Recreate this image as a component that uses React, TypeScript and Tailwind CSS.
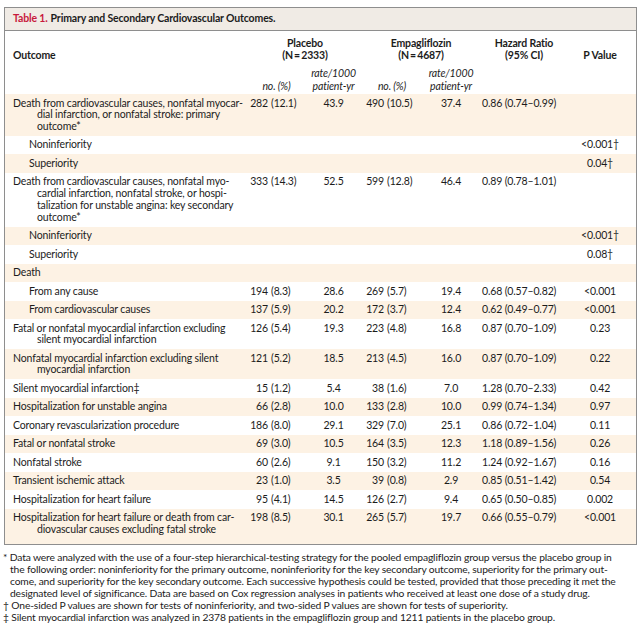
type Row = {
  label: string[];
  sub?: boolean;
  p?: [string, string];
  pr?: string;
  e?: [string, string];
  er?: string;
  hr?: string;
  pv?: string;
};

const rows: Row[] = [
  {
    label: [
      "Death from cardiovascular causes, nonfatal myocar-",
      "dial infarction, or nonfatal stroke: primary",
      "outcome*",
    ],
    p: ["282", "(12.1)"],
    pr: "43.9",
    e: ["490", "(10.5)"],
    er: "37.4",
    hr: "0.86 (0.74–0.99)",
  },
  { label: ["Noninferiority"], sub: true, pv: "<0.001†" },
  { label: ["Superiority"], sub: true, pv: "0.04†" },
  {
    label: [
      "Death from cardiovascular causes, nonfatal myo-",
      "cardial infarction, nonfatal stroke, or hospi-",
      "talization for unstable angina: key secondary",
      "outcome*",
    ],
    p: ["333", "(14.3)"],
    pr: "52.5",
    e: ["599", "(12.8)"],
    er: "46.4",
    hr: "0.89 (0.78–1.01)",
  },
  { label: ["Noninferiority"], sub: true, pv: "<0.001†" },
  { label: ["Superiority"], sub: true, pv: "0.08†" },
  { label: ["Death"] },
  {
    label: ["From any cause"],
    sub: true,
    p: ["194", "(8.3)"],
    pr: "28.6",
    e: ["269", "(5.7)"],
    er: "19.4",
    hr: "0.68 (0.57–0.82)",
    pv: "<0.001",
  },
  {
    label: ["From cardiovascular causes"],
    sub: true,
    p: ["137", "(5.9)"],
    pr: "20.2",
    e: ["172", "(3.7)"],
    er: "12.4",
    hr: "0.62 (0.49–0.77)",
    pv: "<0.001",
  },
  {
    label: ["Fatal or nonfatal myocardial infarction excluding", "silent myocardial infarction"],
    p: ["126", "(5.4)"],
    pr: "19.3",
    e: ["223", "(4.8)"],
    er: "16.8",
    hr: "0.87 (0.70–1.09)",
    pv: "0.23",
  },
  {
    label: ["Nonfatal myocardial infarction excluding silent", "myocardial infarction"],
    p: ["121", "(5.2)"],
    pr: "18.5",
    e: ["213", "(4.5)"],
    er: "16.0",
    hr: "0.87 (0.70–1.09)",
    pv: "0.22",
  },
  {
    label: ["Silent myocardial infarction‡"],
    p: ["15", "(1.2)"],
    pr: "5.4",
    e: ["38", "(1.6)"],
    er: "7.0",
    hr: "1.28 (0.70–2.33)",
    pv: "0.42",
  },
  {
    label: ["Hospitalization for unstable angina"],
    p: ["66", "(2.8)"],
    pr: "10.0",
    e: ["133", "(2.8)"],
    er: "10.0",
    hr: "0.99 (0.74–1.34)",
    pv: "0.97",
  },
  {
    label: ["Coronary revascularization procedure"],
    p: ["186", "(8.0)"],
    pr: "29.1",
    e: ["329", "(7.0)"],
    er: "25.1",
    hr: "0.86 (0.72–1.04)",
    pv: "0.11",
  },
  {
    label: ["Fatal or nonfatal stroke"],
    p: ["69", "(3.0)"],
    pr: "10.5",
    e: ["164", "(3.5)"],
    er: "12.3",
    hr: "1.18 (0.89–1.56)",
    pv: "0.26",
  },
  {
    label: ["Nonfatal stroke"],
    p: ["60", "(2.6)"],
    pr: "9.1",
    e: ["150", "(3.2)"],
    er: "11.2",
    hr: "1.24 (0.92–1.67)",
    pv: "0.16",
  },
  {
    label: ["Transient ischemic attack"],
    p: ["23", "(1.0)"],
    pr: "3.5",
    e: ["39", "(0.8)"],
    er: "2.9",
    hr: "0.85 (0.51–1.42)",
    pv: "0.54",
  },
  {
    label: ["Hospitalization for heart failure"],
    p: ["95", "(4.1)"],
    pr: "14.5",
    e: ["126", "(2.7)"],
    er: "9.4",
    hr: "0.65 (0.50–0.85)",
    pv: "0.002",
  },
  {
    label: ["Hospitalization for heart failure or death from car-", "diovascular causes excluding fatal stroke"],
    p: ["198", "(8.5)"],
    pr: "30.1",
    e: ["265", "(5.7)"],
    er: "19.7",
    hr: "0.66 (0.55–0.79)",
    pv: "<0.001",
  },
];

const grid = "grid grid-cols-[243px_57px_57px_60px_58px_88px_64px]";

function Count({ v, w }: { v?: [string, string]; w: string }) {
  if (!v) return <div />;
  return (
    <div className="flex whitespace-nowrap">
      <span className={w + " text-right"}>{v[0]}</span>
      <span className="ml-[3px]">{v[1]}</span>
    </div>
  );
}

function TableRow({ r, cream, last }: { r: Row; cream: boolean; last: boolean }) {
  return (
    <div
      className={[
        grid,
        "leading-[11.7px] pt-[3.5px]",
        last ? "pb-[8.5px]" : "pb-[3.3px]",
        cream ? "bg-[#fdf2e4]" : "bg-white",
      ].join(" ")}
    >
      <div className={["whitespace-nowrap -indent-[24px]", r.sub ? "pl-[48px]" : "pl-[32px]"].join(" ")}>
        {r.label.map((l, i) => (
          <span key={i}>
            {i > 0 && <br />}
            {l}
          </span>
        ))}
      </div>
      <Count v={r.p} w="w-[20px]" />
      <div className="text-center">{r.pr}</div>
      <Count v={r.e} w="w-[22px]" />
      <div className="text-center">{r.er}</div>
      <div className="pl-[2px] whitespace-nowrap">{r.hr}</div>
      <div className="text-center whitespace-nowrap">{r.pv}</div>
    </div>
  );
}

export default function App() {
  return (
    <div className="w-[643px] h-[626px] bg-white pt-[7px] font-['Lato',sans-serif] text-[10.5px] tracking-[-0.15px] text-[#1c1c1c] overflow-hidden">
      <div className="ml-[4px] w-[633px] border border-[#8e8e8e]">
        <div className="h-[23px] bg-[#f0ebe5] border-b border-[#8e8e8e] flex items-center pl-2 font-bold">
          <span className="text-[#c8193c]">Table 1.</span>
          <span className="ml-[3px]">Primary and Secondary Cardiovascular Outcomes.</span>
        </div>

        <div className={grid + " pt-[6px] leading-[12px] font-bold"}>
          <div className="pl-2 flex items-end">Outcome</div>
          <div className="col-span-2 text-center">
            Placebo
            <br />
            (N{"\u2009=\u2009"}2333)
          </div>
          <div className="col-span-2 text-center">
            Empagliflozin
            <br />
            (N{"\u2009=\u2009"}4687)
          </div>
          <div className="text-center">
            Hazard Ratio
            <br />
            (95% CI)
          </div>
          <div className="flex items-end justify-center">P Value</div>
        </div>

        <div className={grid + " pt-[6px] pb-[1px] leading-[13px] italic"}>
          <div />
          <div className="flex items-end justify-center">no. (%)</div>
          <div className="text-center">
            rate/1000
            <br />
            patient-yr
          </div>
          <div className="flex items-end justify-center">no. (%)</div>
          <div className="text-center">
            rate/1000
            <br />
            patient-yr
          </div>
          <div />
          <div />
        </div>

        {rows.map((r, i) => (
          <TableRow key={i} r={r} cream={i % 2 === 0} last={i === rows.length - 1} />
        ))}
      </div>

      <div className="mt-[6px] text-[10.3px] leading-[12px] whitespace-nowrap">
        <div className="pl-[10px] -indent-[7px]">
          * Data were analyzed with the use of a four-step hierarchical-testing strategy for the pooled empagliflozin group versus the placebo group in
          <br />
          the following order: noninferiority for the primary outcome, noninferiority for the key secondary outcome, superiority for the primary out-
          <br />
          come, and superiority for the key secondary outcome. Each successive hypothesis could be tested, provided that those preceding it met the
          <br />
          designated level of significance. Data are based on Cox regression analyses in patients who received at least one dose of a study drug.
        </div>
        <div className="pl-[10px] -indent-[7px]">
          † One-sided P values are shown for tests of noninferiority, and two-sided P values are shown for tests of superiority.
        </div>
        <div className="pl-[10px] -indent-[7px]">
          ‡ Silent myocardial infarction was analyzed in 2378 patients in the empagliflozin group and 1211 patients in the placebo group.
        </div>
      </div>
    </div>
  );
}
